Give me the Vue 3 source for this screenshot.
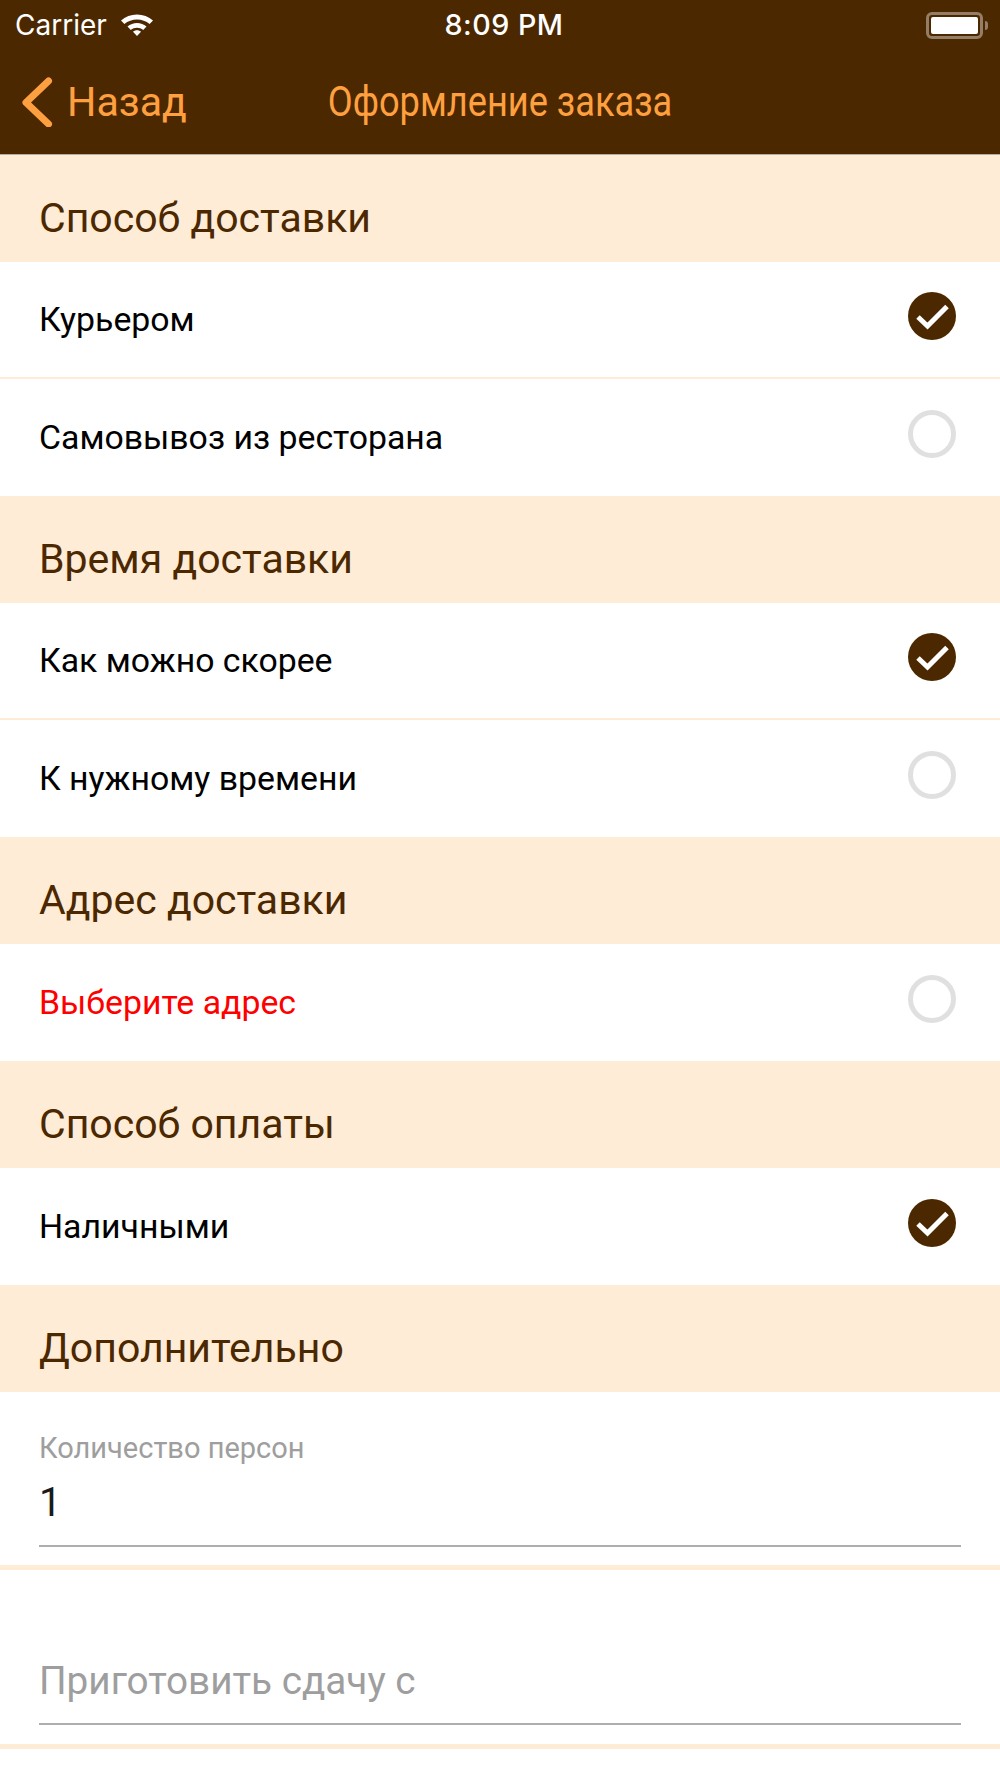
<script setup>
const sections = [
  { title: 'Способ доставки', rows: [
    { text: 'Курьером', checked: true },
    { text: 'Самовывоз из ресторана', checked: false }
  ] },
  { title: 'Время доставки', rows: [
    { text: 'Как можно скорее', checked: true },
    { text: 'К нужному времени', checked: false }
  ] },
  { title: 'Адрес доставки', rows: [
    { text: 'Выберите адрес', checked: false, error: true }
  ] },
  { title: 'Способ оплаты', rows: [
    { text: 'Наличными', checked: true }
  ] }
]
</script>

<template>
  <div class="page">
    <header class="nav">
      <div class="status">
        <div class="status-left">
          <span class="carrier">Carrier</span>
          <svg class="wifi" width="34" height="24" viewBox="0 0 34 24">
            <path d="M1 8.500C9.500 0.500 24.500 0.500 33 8.500L29.600 12C22.800 6 11.200 6 4.400 12Z" fill="#fff"/>
            <path d="M7.500 14.500C12.800 9.800 21.200 9.800 26.500 14.500L23.200 18C19.800 15 14.200 15 10.800 18Z" fill="#fff"/>
            <path d="M13 19.800C15.300 17.800 18.700 17.800 21 19.800L17 24Z" fill="#fff"/>
          </svg>
        </div>
        <span class="time">8:09 PM</span>
        <div class="battery">
          <div class="battery-body"><div class="battery-fill"></div></div>
          <div class="battery-cap"></div>
        </div>
      </div>
      <div class="bar">
        <div class="back">
          <svg width="32" height="50" viewBox="0 0 32 50">
            <path d="M27.500 4L5 25.500L27.500 47" fill="none" stroke="#fea040" stroke-width="7" stroke-linecap="round" stroke-linejoin="round"/>
          </svg>
          <span class="back-label">Назад</span>
        </div>
        <span class="title">Оформление заказа</span>
      </div>
    </header>

    <section v-for="s in sections" :key="s.title">
      <h2 class="section-title">{{ s.title }}</h2>
      <div v-for="(r, i) in s.rows" :key="r.text" class="row" :class="{ divided: i < s.rows.length - 1 }">
        <span class="row-text" :class="{ error: r.error }">{{ r.text }}</span>
        <span v-if="r.checked" class="radio on">
          <svg width="48" height="48" viewBox="0 0 48 48">
            <path d="M10 25L19.500 34L39 14.500" fill="none" stroke="#fff" stroke-width="5"/>
          </svg>
        </span>
        <span v-else class="radio"></span>
      </div>
    </section>

    <section>
      <h2 class="section-title">Дополнительно</h2>
      <div class="field first">
        <div class="field-inner">
          <div class="float-label">Количество персон</div>
          <div class="value">1</div>
        </div>
      </div>
      <div class="band"></div>
      <div class="field">
        <div class="field-inner">
          <div class="placeholder">Приготовить сдачу с</div>
        </div>
      </div>
      <div class="band"></div>
    </section>
  </div>
</template>

<style scoped>
.page {
  width: 1000px;
  height: 1778px;
  overflow: hidden;
  background: #fff;
  font-family: Roboto, "Noto Sans", sans-serif;
}
.nav {
  height: 154.5px;
  background: #4c2800;
  border-bottom: 1px solid #b5aca3;
  box-sizing: border-box;
}
.status {
  height: 50px;
  position: relative;
  display: flex;
  align-items: center;
  justify-content: space-between;
  color: #fff;
  font-family: Inter, Roboto, sans-serif;
}
.status-left {
  display: flex;
  align-items: center;
  gap: 13px;
  margin-left: 15px;
}
.carrier {
  font-size: 28px;
}
.wifi {
  display: block;
  margin-top: -3px;
}
.time {
  position: absolute;
  left: 8px;
  right: 0;
  top: 9px;
  text-align: center;
  font-size: 28.700px;
  font-weight: 500;
  line-height: 32px;
  letter-spacing: 0.5px;
}
.battery {
  display: flex;
  align-items: center;
  gap: 2px;
  margin-right: 12px;
}
.battery-body {
  width: 57px;
  height: 27px;
  box-sizing: border-box;
  border: 3px solid #947e66;
  border-radius: 6px;
  padding: 2px;
}
.battery-fill {
  height: 100%;
  background: #fff;
  border-radius: 2px;
}
.battery-cap {
  width: 3px;
  height: 9px;
  background: #947e66;
  border-radius: 0 3px 3px 0;
}
.bar {
  position: relative;
  height: 103px;
  display: flex;
  align-items: center;
  color: #fea040;
}
.back {
  display: flex;
  align-items: center;
  margin-left: 21px;
  gap: 14px;
}
.back svg {
  display: block;
}
.back-label {
  font-size: 41.200px;
}
.title {
  position: absolute;
  left: 0;
  right: 0;
  text-align: center;
  font-size: 42px;
  transform: scaleX(0.862);
}
.section-title {
  margin: 0;
  height: 107.500px;
  box-sizing: border-box;
  padding-top: 40px;
  background: #ffecd6;
  color: #4c2800;
  font-size: 41px;
  font-weight: 400;
  line-height: 46px;
  padding-left: 39px;
}
.row {
  height: 116.500px;
  box-sizing: border-box;
  padding: 0 44px 0 39px;
  display: flex;
  align-items: center;
  justify-content: space-between;
}
.row.divided {
  height: 117px;
  border-bottom: 2px solid #ffecd6;
}
.row-text {
  font-size: 33.800px;
  color: #000;
}
.row-text.error {
  color: #fe0000;
}
.radio {
  width: 48px;
  height: 48px;
  margin-top: -7px;
  box-sizing: border-box;
  border: 5px solid #e0e0e0;
  border-radius: 50%;
}
.radio.on {
  border: 0;
  background: #4c2800;
}
.radio svg {
  display: block;
}
.field {
  height: 174px;
  padding: 0 39px;
  box-sizing: border-box;
}
.field.first {
  height: 173px;
}
.field-inner {
  height: 154.500px;
  box-sizing: border-box;
  border-bottom: 2px solid #aeaeae;
  position: relative;
}
.float-label {
  position: absolute;
  top: 40px;
  font-size: 29px;
  color: #9e9e9e;
  line-height: 32px;
}
.value {
  position: absolute;
  top: 88px;
  font-size: 40px;
  color: #1a1a1a;
  line-height: 46px;
}
.placeholder {
  position: absolute;
  top: 88px;
  font-size: 38.700px;
  color: #9e9e9e;
  line-height: 46px;
}
.band {
  height: 5px;
  background: #ffecd6;
}
</style>
